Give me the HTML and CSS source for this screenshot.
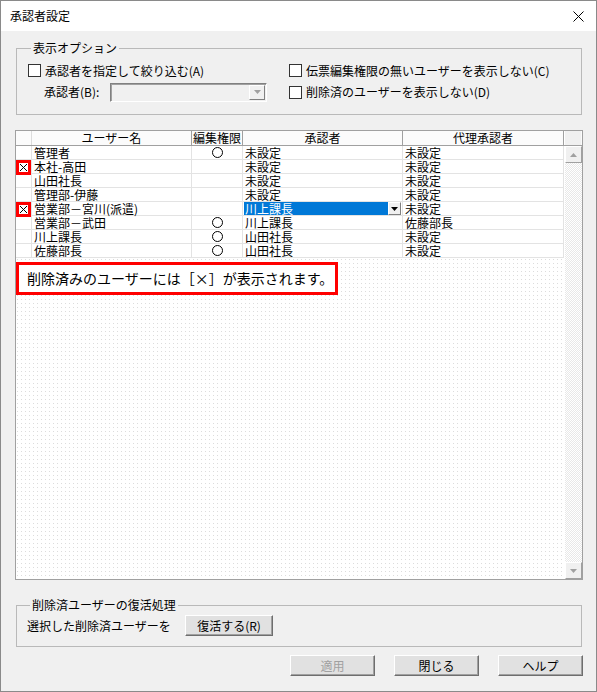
FILE: index.html
```html
<!DOCTYPE html>
<html lang="ja">
<head>
<meta charset="utf-8">
<title>承認者設定</title>
<link rel="stylesheet" href="styles.css">
</head>
<body>
<div class="window">
  <div class="titlebar">
    <span class="title">承認者設定</span>
    <svg class="close" width="11" height="11" viewBox="0 0 11 11"><path d="M0.5 0.5 L10.5 10.5 M10.5 0.5 L0.5 10.5" stroke="#000" stroke-width="1" fill="none"/></svg>
  </div>
  <div class="content">
    <fieldset class="group opts">
      <legend>表示オプション</legend>
      <div class="opts-grid">
        <label class="chk"><span class="box"></span>承認者を指定して絞り込む(A)</label>
        <label class="chk"><span class="box"></span>伝票編集権限の無いユーザーを表示しない(C)</label>
        <div class="approver">
          <span class="approver-label">承認者(B):</span>
          <div class="combo"><div class="combo-btn"><svg width="7" height="4" viewBox="0 0 7 4"><path d="M0 0 H7 L3.5 4 Z" fill="#a0a0a0"/></svg></div></div>
        </div>
        <label class="chk"><span class="box"></span>削除済のユーザーを表示しない(D)</label>
      </div>
    </fieldset>

    <div class="grid">
      <div class="grid-head">
        <div class="hcell"></div>
        <div class="hcell">ユーザー名</div>
        <div class="hcell">編集権限</div>
        <div class="hcell">承認者</div>
        <div class="hcell">代理承認者</div>
        <div class="hcell corner"></div>
      </div>
      <div class="grid-main">
        <div class="grid-body">
          <div class="row"><div class="cell"></div><div class="cell">管理者</div><div class="cell c"><span class="circle"></span></div><div class="cell">未設定</div><div class="cell">未設定</div></div>
          <div class="row"><div class="cell mark"><span class="xmark"><svg width="9" height="9" viewBox="0 0 9 9"><path d="M1 1 L8 8 M8 1 L1 8" stroke="#000" stroke-width="1" fill="none"/></svg></span></div><div class="cell">本社-高田</div><div class="cell c"></div><div class="cell">未設定</div><div class="cell">未設定</div></div>
          <div class="row"><div class="cell"></div><div class="cell">山田社長</div><div class="cell c"></div><div class="cell">未設定</div><div class="cell">未設定</div></div>
          <div class="row"><div class="cell"></div><div class="cell">管理部-伊藤</div><div class="cell c"></div><div class="cell">未設定</div><div class="cell">未設定</div></div>
          <div class="row"><div class="cell mark"><span class="xmark"><svg width="9" height="9" viewBox="0 0 9 9"><path d="M1 1 L8 8 M8 1 L1 8" stroke="#000" stroke-width="1" fill="none"/></svg></span></div><div class="cell">営業部－宮川(派遣)</div><div class="cell c"></div><div class="cell sel"><span class="sel-text">川上課長</span><span class="dd"><svg width="7" height="4" viewBox="0 0 7 4"><path d="M0 0 H7 L3.5 4 Z" fill="#000"/></svg></span></div><div class="cell">未設定</div></div>
          <div class="row"><div class="cell"></div><div class="cell">営業部－武田</div><div class="cell c"><span class="circle"></span></div><div class="cell">川上課長</div><div class="cell">佐藤部長</div></div>
          <div class="row"><div class="cell"></div><div class="cell">川上課長</div><div class="cell c"><span class="circle"></span></div><div class="cell">山田社長</div><div class="cell">未設定</div></div>
          <div class="row"><div class="cell"></div><div class="cell">佐藤部長</div><div class="cell c"><span class="circle"></span></div><div class="cell">山田社長</div><div class="cell">未設定</div></div>
          <div class="note">削除済みのユーザーには［×］が表示されます。</div>
        </div>
        <div class="vscroll">
          <div class="sbtn"><svg width="7" height="4" viewBox="0 0 7 4"><path d="M0 4 H7 L3.5 0 Z" fill="#a0a0a0"/></svg></div>
          <div class="track"></div>
          <div class="sbtn"><svg width="7" height="4" viewBox="0 0 7 4"><path d="M0 0 H7 L3.5 4 Z" fill="#a0a0a0"/></svg></div>
        </div>
      </div>
    </div>

    <fieldset class="group restore">
      <legend>削除済ユーザーの復活処理</legend>
      <div class="restore-row">
        <span>選択した削除済ユーザーを</span>
        <button class="btn restore-btn">復活する(R)</button>
      </div>
    </fieldset>

    <div class="buttons">
      <button class="btn disabled">適用</button>
      <button class="btn">閉じる</button>
      <button class="btn">ヘルプ</button>
    </div>
  </div>
</div>
</body>
</html>
```

FILE: styles.css
```css
* { box-sizing: border-box; }
html, body { margin: 0; padding: 0; }
body {
  font-family: "Noto Sans CJK JP", "Noto Sans", sans-serif;
  font-size: 12px;
  line-height: 14px;
  color: #000;
  background: #fff;
}
.window {
  width: 597px;
  height: 692px;
  border: 1px solid #8a8a8a;
  background: #f0f0f0;
  display: flex;
  flex-direction: column;
}
.titlebar {
  height: 30px;
  flex: none;
  background: #fff;
  display: flex;
  align-items: center;
  justify-content: space-between;
  padding: 0 12px 0 9px;
}
.title { font-size: 12px; }
.close { display: block; }

.content {
  padding: 0 13px 0 14px;
  display: flex;
  flex-direction: column;
}

.group {
  border: 1px solid #b9b9b9;
  margin: 0 1px;
  padding: 0;
  min-width: 0;
}
.group legend {
  padding: 0 2px;
  margin-left: 3px;
  line-height: 14px;
  font-size: 12px;
}
.opts { margin-top: 10px; padding: 9px 0 13px 11px; }
.opts-grid {
  display: grid;
  grid-template-columns: 261px 1fr;
  grid-template-rows: 13px 18px;
  row-gap: 6px;
  align-items: center;
}
.chk { display: flex; align-items: center; gap: 4px; white-space: nowrap; }
.box {
  width: 13px;
  height: 13px;
  background: #fff;
  border: 1px solid #333;
  flex: none;
}
.approver { display: flex; align-items: center; padding-left: 16px; }
.approver-label { width: 66px; }
.combo {
  width: 157px;
  height: 19px;
  background: #f0f0f0;
  border: 1px solid;
  border-color: #808080 #fff #fff #808080;
  box-shadow: inset 1px 1px 0 #a0a0a0;
  display: flex;
  justify-content: flex-end;
  padding: 1px;
}
.combo-btn {
  width: 16px;
  height: 15px;
  background: #f0f0f0;
  border: 1px solid;
  border-color: #fff #808080 #808080 #fff;
  display: flex;
  align-items: center;
  justify-content: center;
}
.combo-btn svg, .sbtn svg, .dd svg { display: block; }

.grid {
  margin-top: 15px;
  height: 450px;
  border: 1px solid #a0a0a0;
  background: #fff;
  display: flex;
  flex-direction: column;
}
.grid-head {
  display: grid;
  grid-template-columns: 16px 160px 51px 160px 161px 17px;
  height: 15px;
  flex: none;
  border-bottom: 1px solid #a0a0a0;
  background: #fbfbfb;
}
.hcell {
  border-right: 1px solid #a0a0a0;
  text-align: center;
  line-height: 14px;
  white-space: nowrap;
}
.hcell:first-child { border-right: 1px solid #dcdcdc; }
.hcell.corner {
  border-right: none;
  background: #f0f0f0;
  border-left: 1px solid #fff;
}
.grid-main { flex: 1; display: flex; min-height: 0; }
.grid-body {
  flex: 1;
  background-color: #dcdcdc;
  background-image:
    linear-gradient(to right, transparent 1px, #fff 1px),
    linear-gradient(to bottom, transparent 1px, #fff 1px);
  background-size: 4px 4px, 4px 4px;
  background-position: 1px 1px;
}
.row {
  display: grid;
  grid-template-columns: 16px 160px 51px 160px 161px;
  height: 14px;
  background: #fff;
}
.cell {
  border-right: 1px solid #e3e3e3;
  border-bottom: 1px solid #e3e3e3;
  padding-left: 2px;
  line-height: 13px;
  white-space: nowrap;
}
.cell.c {
  padding-left: 0;
  display: flex;
  align-items: center;
  justify-content: center;
}
.circle {
  width: 11px;
  height: 11px;
  border: 1px solid #000;
  border-radius: 50%;
  margin-bottom: 1px;
}
.cell.mark { position: relative; padding: 0; }
.xmark {
  position: absolute;
  left: 0;
  top: 0;
  width: 15px;
  height: 15px;
  border: 3px solid #ff0000;
  background: #fff;
  display: flex;
  align-items: center;
  justify-content: center;
  z-index: 1;
}
.cell.sel {
  display: flex;
  padding-left: 1px;
  padding-right: 1px;
}
.sel-text {
  flex: 1;
  background: #0078d7;
  color: #fff;
  padding-left: 1px;
}
.dd {
  width: 13px;
  height: 13px;
  background: #f0f0f0;
  border: 1px solid;
  border-color: #fff #808080 #808080 #fff;
  display: flex;
  align-items: center;
  justify-content: center;
}
.note {
  margin-top: 4px;
  width: 322px;
  height: 33px;
  border: 3px solid #ff0000;
  background: #fff;
  font-size: 14px;
  line-height: 16px;
  padding: 5px 0 0 8px;
  white-space: nowrap;
}
.vscroll {
  width: 17px;
  flex: none;
  display: flex;
  flex-direction: column;
}
.sbtn {
  height: 17px;
  background: #f0f0f0;
  border: 1px solid;
  border-color: #fff #a0a0a0 #a0a0a0 #fff;
  display: flex;
  align-items: center;
  justify-content: center;
  flex: none;
}
.track {
  flex: 1;
  background: repeating-conic-gradient(#e8e8e8 0 25%, #fff 0 50%) 0 0 / 2px 2px;
}

.restore { margin-top: 18px; padding: 3px 0 10px 10px; }
.restore-row { display: flex; align-items: center; }
.restore-row span { width: 158px; }
.btn {
  font-family: inherit;
  font-size: 12px;
  line-height: 14px;
  height: 21px;
  background: #e1e1e1;
  border: 1px solid;
  border-color: #fff #6e6e6e #6e6e6e #fff;
  box-shadow: inset -1px -1px 0 #a0a0a0;
  padding: 0;
  color: #000;
}
.restore-btn { width: 88px; }
.buttons {
  margin-top: 8px;
  display: flex;
  justify-content: flex-end;
  gap: 19px;
}
.buttons .btn { width: 85px; }
.btn.disabled { color: #a0a0a0; }
```
